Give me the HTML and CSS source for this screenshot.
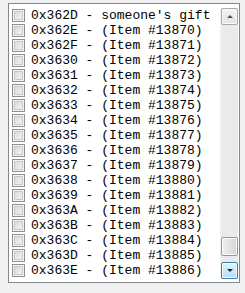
FILE: index.html
```html
<!DOCTYPE html>
<html lang="en">
<head>
    <meta charset="UTF-8">
    <title>Item List</title>
    <link rel="stylesheet" href="styles.css">
</head>
<body>
    <div class="listbox">
        <div class="items">
            <div class="row"><span class="check"></span>0x362D - someone's gift</div>
            <div class="row"><span class="check"></span>0x362E - (Item #13870)</div>
            <div class="row"><span class="check"></span>0x362F - (Item #13871)</div>
            <div class="row"><span class="check"></span>0x3630 - (Item #13872)</div>
            <div class="row"><span class="check"></span>0x3631 - (Item #13873)</div>
            <div class="row"><span class="check"></span>0x3632 - (Item #13874)</div>
            <div class="row"><span class="check"></span>0x3633 - (Item #13875)</div>
            <div class="row"><span class="check"></span>0x3634 - (Item #13876)</div>
            <div class="row"><span class="check"></span>0x3635 - (Item #13877)</div>
            <div class="row"><span class="check"></span>0x3636 - (Item #13878)</div>
            <div class="row"><span class="check"></span>0x3637 - (Item #13879)</div>
            <div class="row"><span class="check"></span>0x3638 - (Item #13880)</div>
            <div class="row"><span class="check"></span>0x3639 - (Item #13881)</div>
            <div class="row"><span class="check"></span>0x363A - (Item #13882)</div>
            <div class="row"><span class="check"></span>0x363B - (Item #13883)</div>
            <div class="row"><span class="check"></span>0x363C - (Item #13884)</div>
            <div class="row"><span class="check"></span>0x363D - (Item #13885)</div>
            <div class="row"><span class="check"></span>0x363E - (Item #13886)</div>
        </div>
        <div class="scrollbar">
            <div class="sb-btn up"><span class="arrow"></span></div>
            <div class="track"></div>
            <div class="thumb"></div>
            <div class="sb-btn down hot"><span class="arrow"></span></div>
        </div>
    </div>
</body>
</html>
```

FILE: styles.css
```css
/* General */
body {
    margin: 0;
    background: #f0f0f0;
    font-family: "Liberation Mono", "DejaVu Sans Mono", monospace;
    font-size: 13px;
    color: #000;
}

.listbox {
    margin: 3px 0 0 8px;
    width: 230px;
    height: 278px;
    border: 1px solid #828790;
    background: #fff;
    display: flex;
    overflow: hidden;
}

.items {
    flex: 1;
    padding: 4px 0 0 3px;
    overflow: hidden;
}

.row {
    display: flex;
    align-items: center;
    height: 15px;
    white-space: nowrap;
}

.check {
    width: 11px;
    height: 11px;
    margin-right: 6px;
    border: 1px solid #8f8f8f;
    background: linear-gradient(135deg, #d6d6d6, #f7f7f7);
    box-shadow: inset 0 0 0 1px #f4f4f4, inset 0 0 0 2px #c8c8c8;
    flex: none;
}

/* Scrollbar */
.scrollbar {
    width: 17px;
    margin: 4px 1px 3px 0;
    display: flex;
    flex-direction: column;
    background: #eaeaea;
    border-left: 1px solid #f2f2f2;
}

.sb-btn {
    height: 15px;
    border: 1px solid #a8a8a8;
    border-radius: 2px;
    background: linear-gradient(#f4f4f4, #e2e2e2);
    display: flex;
    align-items: center;
    justify-content: center;
    box-shadow: inset 0 0 0 1px #fafafa;
}

.arrow {
    width: 0;
    height: 0;
    border-left: 3px solid transparent;
    border-right: 3px solid transparent;
}

.up .arrow {
    border-bottom: 3px solid #4d4d4d;
}

.down .arrow {
    border-top: 3px solid #0d2a4a;
}

.sb-btn.hot {
    border-color: #3c7fb1;
    background: linear-gradient(#e5f4fc, #b3def5);
    box-shadow: inset 0 0 0 1px #eef8fd;
}

.track {
    flex: 1;
}

.thumb {
    height: 17px;
    margin-bottom: 6px;
    border: 1px solid #979797;
    border-radius: 2px;
    background: linear-gradient(90deg, #f0f0f0, #e0e0e0 60%, #d4d4d4);
    box-shadow: inset 0 0 0 1px #fbfbfb;
}
```
